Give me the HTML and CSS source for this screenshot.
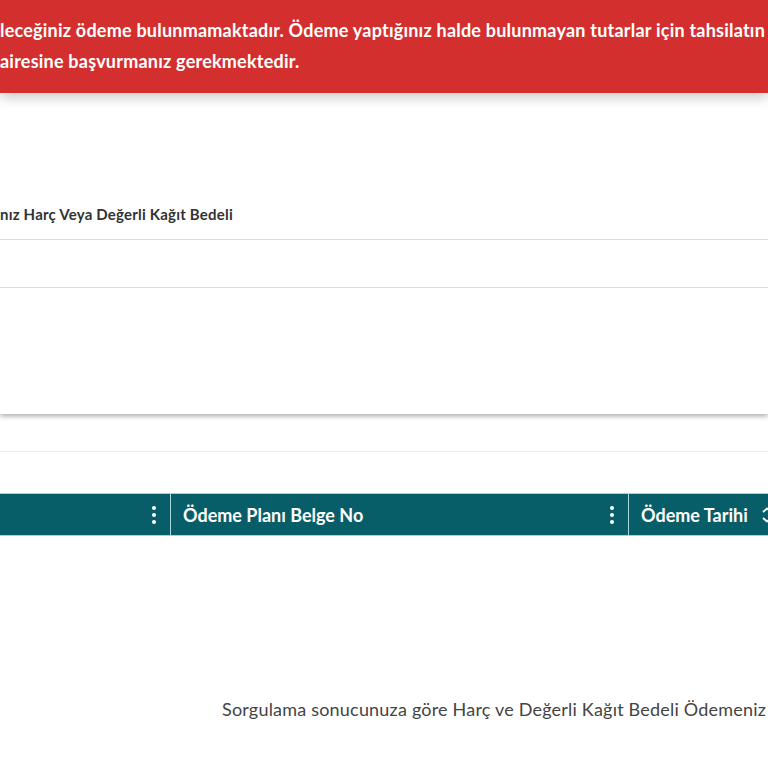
FILE: index.html
```html
<!DOCTYPE html>
<html lang="tr">
<head>
    <meta charset="UTF-8">
    <meta name="viewport" content="width=device-width, initial-scale=1.0">
    <title>Harç ve Değerli Kağıt Bedeli Sorgulama</title>
    <link rel="stylesheet" href="styles.css">
</head>
<body>
    <div class="alert">
        <p>leceğiniz ödeme bulunmamaktadır. Ödeme yaptığınız halde bulunmayan tutarlar için tahsilatın</p>
        <p>airesine başvurmanız gerekmektedir.</p>
    </div>

    <div class="card">
        <div class="card-label">nız Harç Veya Değerli Kağıt Bedeli</div>
        <div class="card-field"></div>
    </div>

    <div class="toolbar"></div>

    <div class="grid">
        <div class="grid-head">
            <div class="col col-first">
                <span class="kebab"><i></i><i></i><i></i></span>
            </div>
            <div class="col col-mid">
                <span class="col-title">Ödeme Planı Belge No</span>
                <span class="kebab"><i></i><i></i><i></i></span>
            </div>
            <div class="col col-last">
                <span class="col-title">Ödeme Tarihi</span>
                <svg class="sort" width="12" height="16" viewBox="0 0 12 16">
                    <path d="M2 5 L6 1.5 L10 5 M2 11 L6 14.5 L10 11" fill="none" stroke="#fff" stroke-width="1.8"/>
                </svg>
            </div>
        </div>
        <div class="grid-empty">
            Sorgulama sonucunuza göre Harç ve Değerli Kağıt Bedeli Ödemeniz
        </div>
    </div>
</body>
</html>
```

FILE: styles.css
```css
body {
    margin: 0;
    width: 768px;
    overflow: hidden;
    background: #fff;
    font-family: Lato, "Noto Sans", sans-serif;
    color: #333;
}
.alert {
    background-color: #d32f2f;
    color: #fff;
    font-size: 18px;
    font-weight: 700;
    letter-spacing: 0.22px;
    line-height: 31px;
    padding: 15px 0 16px;
    white-space: nowrap;
    box-shadow: 0 4px 12px rgba(0, 0, 0, 0.22);
    position: relative;
    z-index: 2;
}
.alert p {
    margin: 0;
}
.card {
    background: #fff;
    padding-top: 111px;
    padding-bottom: 126px;
    box-shadow: 0 2px 5px rgba(0, 0, 0, 0.35);
    position: relative;
    z-index: 1;
}
.card-label {
    font-size: 15px;
    font-weight: 700;
    letter-spacing: 0.2px;
    line-height: 20px;
    color: #333;
    padding-bottom: 15px;
    white-space: nowrap;
    border-bottom: 1px solid #dcdcdc;
}
.card-field {
    height: 47px;
    border-bottom: 1px solid #dcdcdc;
}
.toolbar {
    height: 37px;
    border-bottom: 1px solid #ebebeb;
}
.grid-head {
    display: flex;
    height: 41px;
    margin-top: 41px;
    background-color: #075e68;
    color: #fff;
    font-size: 18px;
    font-weight: 700;
    border-top: 1px solid #9fd4da;
    border-bottom: 1px solid #9fd4da;
}
.col {
    display: flex;
    align-items: center;
    flex-shrink: 0;
    padding: 0 12px;
    box-sizing: border-box;
    border-right: 1px solid #a9d7dc;
}
.col-first {
    width: 171px;
    justify-content: flex-end;
    padding-right: 14px;
}
.col-mid {
    width: 458px;
    justify-content: space-between;
    padding-right: 14px;
}
.col-last {
    flex: 1 0 auto;
    border-right: none;
    gap: 13px;
    white-space: nowrap;
}
.kebab {
    display: flex;
    flex-direction: column;
    gap: 3px;
}
.kebab i {
    display: block;
    width: 4px;
    height: 4px;
    border-radius: 50%;
    background: #fff;
}
.sort {
    flex-shrink: 0;
}
.grid-empty {
    padding: 161px 0 0 222px;
    font-size: 18px;
    letter-spacing: 0.2px;
    line-height: 24px;
    color: #444;
    white-space: nowrap;
}
```
